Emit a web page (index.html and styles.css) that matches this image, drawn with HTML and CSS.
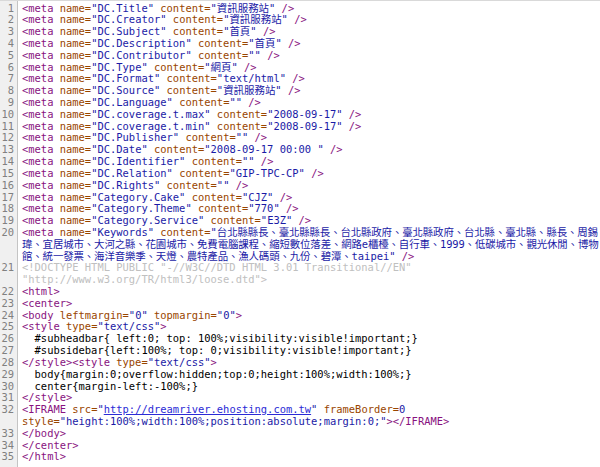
FILE: index.html
```html
<!DOCTYPE html>
<html lang="zh-Hant">
<head>
  <meta charset="UTF-8" />
  <meta name="viewport" content="width=device-width, initial-scale=1.0" />
  <title>view-source</title>
  <link rel="stylesheet" href="styles.css">
</head>
<body>
  <div class="source">
<pre class="gutter">1
2
3
4
5
6
7
8
9
10
11
12
13
14
15
16
17
18
19
20


21

22
23
24
25
26
27
28
29
30
31
32

33
34
35</pre>
<pre class="code"><span class="t">&lt;meta </span><span class="n">name=</span><span class="v">"DC.Title"</span> <span class="n">content=</span><span class="v">"資訊服務站"</span><span class="t"> /&gt;</span>
<span class="t">&lt;meta </span><span class="n">name=</span><span class="v">"DC.Creator"</span> <span class="n">content=</span><span class="v">"資訊服務站"</span><span class="t"> /&gt;</span>
<span class="t">&lt;meta </span><span class="n">name=</span><span class="v">"DC.Subject"</span> <span class="n">content=</span><span class="v">"首頁"</span><span class="t"> /&gt;</span>
<span class="t">&lt;meta </span><span class="n">name=</span><span class="v">"DC.Description"</span> <span class="n">content=</span><span class="v">"首頁"</span><span class="t"> /&gt;</span>
<span class="t">&lt;meta </span><span class="n">name=</span><span class="v">"DC.Contributor"</span> <span class="n">content=</span><span class="v">""</span><span class="t"> /&gt;</span>
<span class="t">&lt;meta </span><span class="n">name=</span><span class="v">"DC.Type"</span> <span class="n">content=</span><span class="v">"網頁"</span><span class="t"> /&gt;</span>
<span class="t">&lt;meta </span><span class="n">name=</span><span class="v">"DC.Format"</span> <span class="n">content=</span><span class="v">"text/html"</span><span class="t"> /&gt;</span>
<span class="t">&lt;meta </span><span class="n">name=</span><span class="v">"DC.Source"</span> <span class="n">content=</span><span class="v">"資訊服務站"</span><span class="t"> /&gt;</span>
<span class="t">&lt;meta </span><span class="n">name=</span><span class="v">"DC.Language"</span> <span class="n">content=</span><span class="v">""</span><span class="t"> /&gt;</span>
<span class="t">&lt;meta </span><span class="n">name=</span><span class="v">"DC.coverage.t.max"</span> <span class="n">content=</span><span class="v">"2008-09-17"</span><span class="t"> /&gt;</span>
<span class="t">&lt;meta </span><span class="n">name=</span><span class="v">"DC.coverage.t.min"</span> <span class="n">content=</span><span class="v">"2008-09-17"</span><span class="t"> /&gt;</span>
<span class="t">&lt;meta </span><span class="n">name=</span><span class="v">"DC.Publisher"</span> <span class="n">content=</span><span class="v">""</span><span class="t"> /&gt;</span>
<span class="t">&lt;meta </span><span class="n">name=</span><span class="v">"DC.Date"</span> <span class="n">content=</span><span class="v">"2008-09-17 00:00 "</span><span class="t"> /&gt;</span>
<span class="t">&lt;meta </span><span class="n">name=</span><span class="v">"DC.Identifier"</span> <span class="n">content=</span><span class="v">""</span><span class="t"> /&gt;</span>
<span class="t">&lt;meta </span><span class="n">name=</span><span class="v">"DC.Relation"</span> <span class="n">content=</span><span class="v">"GIP-TPC-CP"</span><span class="t"> /&gt;</span>
<span class="t">&lt;meta </span><span class="n">name=</span><span class="v">"DC.Rights"</span> <span class="n">content=</span><span class="v">""</span><span class="t"> /&gt;</span>
<span class="t">&lt;meta </span><span class="n">name=</span><span class="v">"Category.Cake"</span> <span class="n">content=</span><span class="v">"CJZ"</span><span class="t"> /&gt;</span>
<span class="t">&lt;meta </span><span class="n">name=</span><span class="v">"Category.Theme"</span> <span class="n">content=</span><span class="v">"770"</span><span class="t"> /&gt;</span>
<span class="t">&lt;meta </span><span class="n">name=</span><span class="v">"Category.Service"</span> <span class="n">content=</span><span class="v">"E3Z"</span><span class="t"> /&gt;</span>
<span class="t">&lt;meta </span><span class="n">name=</span><span class="v">"Keywords"</span> <span class="n">content=</span><span class="v">"<span class="cjk">台北縣縣長、臺北縣縣長、台北縣政府、臺北縣政府、台北縣、臺北縣、縣長、周錫</span>
<span class="cjk">瑋、宜居城市、大河之縣、花園城市、免費電腦課程、縮短數位落差、網路e櫃檯、自行車、1999、低碳城市、觀光休閒、博物</span>
<span class="cjk">館、統一發票、海洋音樂季、天燈、農特產品、漁人碼頭、九份、碧潭、</span>taipei"</span><span class="t"> /&gt;</span>
<span class="d">&lt;!DOCTYPE HTML PUBLIC "-//W3C//DTD HTML 3.01 Transitional//EN"
"http://www.w3.org/TR/html3/loose.dtd"&gt;</span>
<span class="t">&lt;html&gt;</span>
<span class="t">&lt;center&gt;</span>
<span class="t">&lt;body </span><span class="n">leftmargin=</span><span class="v">"0"</span> <span class="n">topmargin=</span><span class="v">"0"</span><span class="t">&gt;</span>
<span class="t">&lt;style </span><span class="n">type=</span><span class="v">"text/css"</span><span class="t">&gt;</span>
  #subheadbar{ left:0; top: 100%;visibility:visible!important;}
  #subsidebar{left:100%; top: 0;visibility:visible!important;}
<span class="t">&lt;/style&gt;&lt;style </span><span class="n">type=</span><span class="v">"text/css"</span><span class="t">&gt;</span>
  body{margin:0;overflow:hidden;top:0;height:100%;width:100%;}
  center{margin-left:-100%;}
<span class="t">&lt;/style&gt;</span>
<span class="t">&lt;IFRAME </span><span class="n">src=</span><span class="v">"<a class="l" href="#">http://dreamriver.ehosting.com.tw</a>"</span> <span class="n">frameBorder=</span><span class="v">0</span>
<span class="n">style=</span><span class="v">"height:100%;width:100%;position:absolute;margin:0;"</span><span class="t">&gt;&lt;/IFRAME&gt;</span>
<span class="t">&lt;/body&gt;</span>
<span class="t">&lt;/center&gt;</span>
<span class="t">&lt;/html&gt;</span></pre>
  </div>
</body>
</html>
```

FILE: styles.css
```css
body {
  margin: 0;
  background: #fff;
}
.source {
  display: flex;
  min-height: 100vh;
  box-sizing: border-box;
  border-top: 1px solid #d9d9d9;
  font-family: "DejaVu Sans Mono", "Noto Sans CJK TC", monospace;
  font-size: 10.45px;
  line-height: 11.82px;
  color: #000;
}
pre {
  margin: 0;
  padding-top: 1.5px;
  font: inherit;
  white-space: pre;
}
.gutter {
  flex: none;
  width: 18px;
  box-sizing: border-box;
  padding-right: 3px;
  text-align: right;
  background: #f0f0f0;
  border-right: 1px solid #c4c4c4;
  color: #808080;
}
.code {
  flex: 1;
  padding-left: 4px;
  overflow: hidden;
}
.t { color: #881280; }
.n { color: #994500; }
.v { color: #1a1aa6; }
.d { color: #c0c0c0; }
.l {
  color: #2b2bd6;
  text-decoration: underline;
}
.cjk {
  letter-spacing: -0.14px;
}
```
